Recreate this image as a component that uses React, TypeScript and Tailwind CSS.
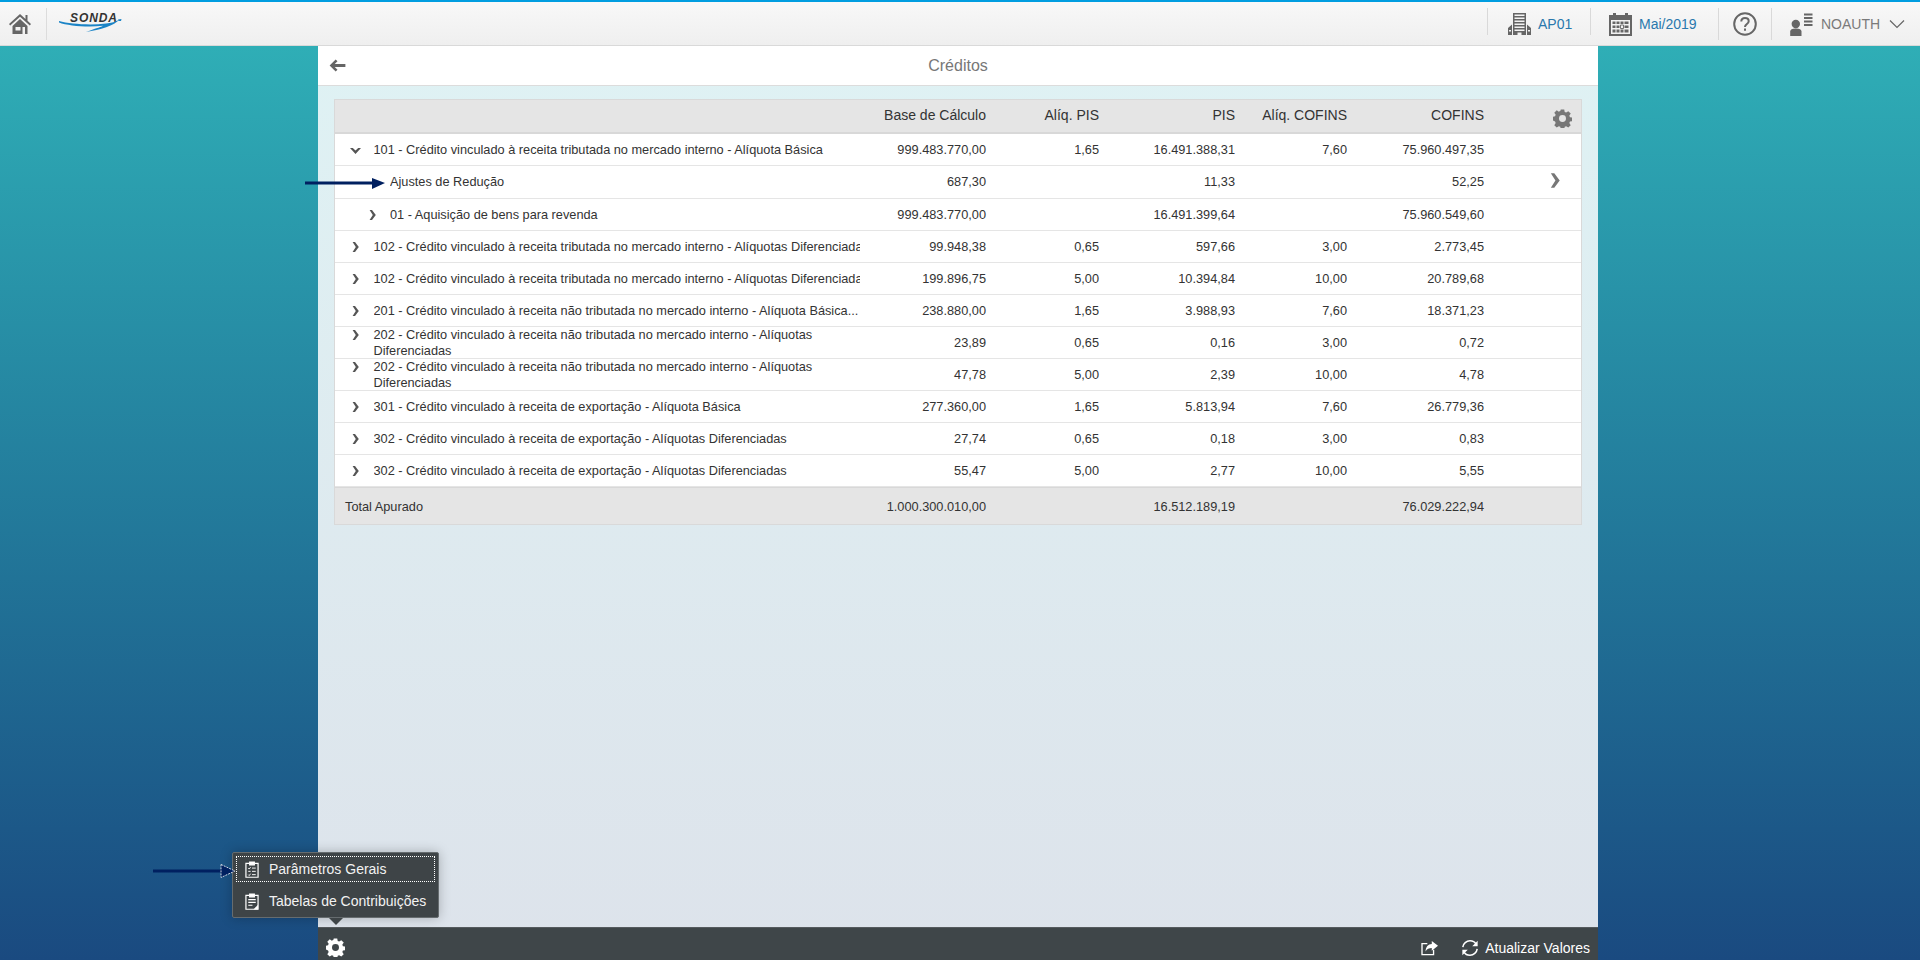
import React from "react";

type Row = { t: string; b: string; ap?: string; p: string; ac?: string; c: string; indent?: boolean; open?: boolean; noChev?: boolean; wrap?: boolean; end?: boolean };

const rows: Row[] = [
  { t: "101 - Crédito vinculado à receita tributada no mercado interno - Alíquota Básica", b: "999.483.770,00", ap: "1,65", p: "16.491.388,31", ac: "7,60", c: "75.960.497,35", open: true },
  { t: "Ajustes de Redução", b: "687,30", p: "11,33", c: "52,25", indent: true, noChev: true, end: true },
  { t: "01 - Aquisição de bens para revenda", b: "999.483.770,00", p: "16.491.399,64", c: "75.960.549,60", indent: true },
  { t: "102 - Crédito vinculado à receita tributada no mercado interno - Alíquotas Diferenciadas", b: "99.948,38", ap: "0,65", p: "597,66", ac: "3,00", c: "2.773,45" },
  { t: "102 - Crédito vinculado à receita tributada no mercado interno - Alíquotas Diferenciadas", b: "199.896,75", ap: "5,00", p: "10.394,84", ac: "10,00", c: "20.789,68" },
  { t: "201 - Crédito vinculado à receita não tributada no mercado interno - Alíquota Básica...", b: "238.880,00", ap: "1,65", p: "3.988,93", ac: "7,60", c: "18.371,23" },
  { t: "202 - Crédito vinculado à receita não tributada no mercado interno - Alíquotas Diferenciadas", b: "23,89", ap: "0,65", p: "0,16", ac: "3,00", c: "0,72", wrap: true },
  { t: "202 - Crédito vinculado à receita não tributada no mercado interno - Alíquotas Diferenciadas", b: "47,78", ap: "5,00", p: "2,39", ac: "10,00", c: "4,78", wrap: true },
  { t: "301 - Crédito vinculado à receita de exportação - Alíquota Básica", b: "277.360,00", ap: "1,65", p: "5.813,94", ac: "7,60", c: "26.779,36" },
  { t: "302 - Crédito vinculado à receita de exportação - Alíquotas Diferenciadas", b: "27,74", ap: "0,65", p: "0,18", ac: "3,00", c: "0,83" },
  { t: "302 - Crédito vinculado à receita de exportação - Alíquotas Diferenciadas", b: "55,47", ap: "5,00", p: "2,77", ac: "10,00", c: "5,55" },
];

function ChevR({ className = "", color = "#555" }: { className?: string; color?: string }) {
  return (
    <svg viewBox="0 0 7 10" className={className} fill={color}>
      <path d="M0.6 0 H3 L6.8 5 L3 10 H0.6 L3.8 5 Z" />
    </svg>
  );
}

function ChevD({ className = "" }: { className?: string }) {
  return (
    <svg viewBox="0 0 11 6" className={className} fill="#555">
      <path d="M0 0 L2.8 0 L5.5 2.6 L8.2 0 L11 0 L5.5 6 Z" />
    </svg>
  );
}

function Gear({ className = "", color = "#777" }: { className?: string; color?: string }) {
  return (
    <svg viewBox="0 0 24 24" className={className} fill={color}>
      <path fillRule="evenodd" d="M9.8 0.5h4.4l.6 3.2c.6.2 1.2.5 1.8.8l2.7-1.8 3.1 3.1-1.8 2.7c.3.6.6 1.2.8 1.8l3.2.6v4.4l-3.2.6c-.2.6-.5 1.2-.8 1.8l1.8 2.7-3.1 3.1-2.7-1.8c-.6.3-1.2.6-1.8.8l-.6 3.2H9.8l-.6-3.2c-.6-.2-1.2-.5-1.8-.8l-2.7 1.8-3.1-3.1 1.8-2.7c-.3-.6-.6-1.2-.8-1.8L-.6 14.2V9.8l3.2-.6c.2-.6.5-1.2.8-1.8L1.6 4.7l3.1-3.1 2.7 1.8c.6-.3 1.2-.6 1.8-.8L9.8.5zM12 7.6a4.4 4.4 0 1 0 0 8.8 4.4 4.4 0 0 0 0-8.8z" />
    </svg>
  );
}

function Sep({ h }: { h: string }) {
  return <div className={`w-px shrink-0 self-start mt-[6px] bg-[#d9d9d9] ${h}`} />;
}

export default function App() {
  return (
    <div className="relative w-[1920px] h-[962px] bg-white overflow-hidden [font-family:Liberation_Sans,Arial,sans-serif] text-[#333]">
      {/* Shell header */}
      <header className="absolute left-0 top-0 w-full h-[46px] border-t-2 border-[#009de0] border-b border-b-[#d9d9d9] bg-gradient-to-b from-[#f8f8f8] to-[#efefef]">
        <svg viewBox="0 0 22 20" className="absolute left-[9px] top-[12px] w-[22px] h-[20px]" fill="#666">
          <path d="M11 0 L0 10 L1.2 11.5 L11 2.8 L20.8 11.5 L22 10 L18.5 6.8 V1 H16.5 V5 Z" />
          <path fillRule="evenodd" d="M3.5 12 L11 5 L18.5 12 V20 H3.5 Z M6.5 13 V16.5 H11.5 V13 Z M13.5 13 V20 H16 V13 Z" />
        </svg>
        <div className="absolute left-[46px] top-[6px] w-px h-[32px] bg-[#dcdcdc]" />
        {/* Logo */}
        <div className="absolute left-[58px] top-[8px] w-[66px] h-[28px]">
          <span className="absolute left-[12px] top-[2px] text-[12px] leading-[13px] font-bold italic text-[#333] tracking-[0.9px]">SONDA</span>
          <svg viewBox="0 0 66 28" className="absolute left-0 top-0 w-[66px] h-[28px]">
            <path d="M1 11 C12 14 32 15.5 48 13.5 C53 13 58 11.5 61 10 C57 15 42 20 28 22 C36 19 42 17.5 45 15.8 C30 17.5 10 16 1 12.5 Z" fill="#1b84c6" />
            <path d="M60 9.5 L63.5 9 L63 11 L60.5 11 Z" fill="#1b84c6" />
          </svg>
        </div>

        <div className="absolute left-[1487px] top-0 h-[44px] flex items-center">
          <Sep h="h-[27px]" />
          <div className="flex items-center w-[102px] pl-[20px] gap-[7px]">
            <svg viewBox="0 0 23 22" className="w-[23px] h-[22px]" fill="#666">
              <path fillRule="evenodd" d="M5 0 H18 V22 H5 Z M6.5 1.5 V3 H16.5 V1.5 Z M6.5 4.5 V6 H16.5 V4.5 Z M6.5 7.5 V9 H16.5 V7.5 Z M6.5 10.5 V12 H16.5 V10.5 Z M6.5 13.5 V15 H16.5 V13.5 Z M6.5 16.5 V18 H16.5 V16.5 Z M9.5 19.5 V22 H13.5 V19.5 Z" />
              <path fillRule="evenodd" d="M0 15 L4 11.5 V22 H0 Z M1 17 V18.5 H3 V17 Z" />
              <path fillRule="evenodd" d="M19 11.5 L23 15 V22 H19 Z M20 17 V18.5 H22 V17 Z" />
            </svg>
            <span className="text-[14px] text-[#2a78ad]">AP01</span>
          </div>
          <Sep h="h-[27px]" />
          <div className="flex items-center w-[127px] pl-[18px] gap-[7px]">
            <svg viewBox="0 0 23 23" className="w-[23px] h-[23px]" fill="#666">
              <path fillRule="evenodd" d="M0 2 H4 V0 H7 V2 H16 V0 H19 V2 H23 V23 H0 Z M2 7 V21 H21 V7 Z" />
              <path d="M3.5 8.5 H6.5 V11 H3.5 Z M7.5 8.5 H10.5 V11 H7.5 Z M11.5 8.5 H14.5 V11 H11.5 Z M15.5 8.5 H19.5 V11 H15.5 Z M3.5 12.5 H6.5 V15 H3.5 Z M7.5 12.5 H10.5 V15 H7.5 Z M15.5 12.5 H19.5 V15 H15.5 Z M3.5 16.5 H6.5 V19.5 H3.5 Z M7.5 16.5 H10.5 V19.5 H7.5 Z M11.5 16.5 H14.5 V19.5 H11.5 Z M15.5 16.5 H19.5 V19.5 H15.5 Z" />
              <path d="M11.5 12 H14.5 V15.5 H11.5 Z" fill="none" stroke="#666" strokeWidth="0.9" />
            </svg>
            <span className="text-[14px] text-[#2a78ad]">Mai/2019</span>
          </div>
          <Sep h="h-[32px]" />
          <div className="flex items-center justify-center w-[52px]">
            <svg viewBox="0 0 24 24" className="w-[24px] h-[24px]" fill="none" stroke="#666" strokeWidth="2">
              <circle cx="12" cy="12" r="10.8" />
              <path d="M8.3 9.6 C8.3 7.2 10 6 12 6 C14 6 15.7 7.2 15.7 9.2 C15.7 12 12 12 12 15" />
              <path d="M12 16.5 V18.8" />
            </svg>
          </div>
          <Sep h="h-[32px]" />
          <div className="flex items-center w-[134px] pl-[18px]">
            <svg viewBox="0 0 23 23" className="w-[23px] h-[23px]" fill="#666">
              <circle cx="5.8" cy="11" r="4.2" />
              <path d="M0.2 23 V18.5 C0.2 16.5 2 15.5 5.8 15.5 C9.6 15.5 11.5 16.5 11.5 18.5 V23 Z" />
              <path d="M14 0.5 H22.5 V2.5 H14 Z M14 4 H22.5 V6 H14 Z M14 7.5 H22.5 V9.5 H14 Z M14 11 H22.5 V13 H14 Z" />
            </svg>
            <span className="ml-[8px] text-[14px] text-[#7a7a7a] w-[60px]">NOAUTH</span>
            <svg viewBox="0 0 16 10" className="ml-[8px] w-[16px] h-[10px]" fill="none" stroke="#666" strokeWidth="1.2">
              <path d="M1 1.5 L8 8.5 L15 1.5" />
            </svg>
          </div>
        </div>
      </header>

      {/* Background */}
      <div className="absolute left-0 top-[46px] w-full h-[914px] bg-gradient-to-b from-[#2faeb6] to-[#1a4a80]" />

      {/* Main */}
      <main className="absolute left-[318px] top-[46px] w-[1280px] h-[914px] bg-gradient-to-b from-[#dff2f4] to-[#dde3eb] flex flex-col">
        <div className="h-[40px] bg-white border-b border-[#dcdcdc] flex items-center justify-center relative shrink-0">
          <svg viewBox="0 0 18 14" className="absolute left-[11px] top-[13px] w-[17px] h-[13px]" fill="#666">
            <path d="M7 0.5 L9 2.5 L6 5.5 H17.5 V8.5 H6 L9 11.5 L7 13.5 L0.5 7 Z" />
          </svg>
          <span className="text-[16px] text-[#777]">Créditos</span>
        </div>

        <div className="mx-[16px] mt-[13px] border border-[#d9d9d9] bg-white">
          <div className="h-[34px] bg-[#e5e5e5] border-b-2 border-[#d8d8d8] flex items-center text-[14px] text-[#333] relative">
            <div className="w-[525px]" />
            <div className="w-[126px] text-right pb-[1px]">Base de Cálculo</div>
            <div className="w-[113px] text-right pb-[1px]">Alíq. PIS</div>
            <div className="w-[136px] text-right pb-[1px]">PIS</div>
            <div className="w-[112px] text-right pb-[1px]">Alíq. COFINS</div>
            <div className="w-[137px] text-right pb-[1px]">COFINS</div>
            <Gear className="absolute left-[1218px] top-[9px] w-[19px] h-[19px]" />
          </div>
          {rows.map((r, i) => (
            <div key={i} className={`border-b border-[#e5e5e5] flex items-center text-[12.75px] relative last:border-b-0 ${i === 1 ? "h-[33px]" : "h-[32px]"}`}>
              <div className={`w-[525px] relative h-full ${r.indent ? "pl-[55px]" : "pl-[38.5px]"}`}>
                {!r.noChev && !r.open && (
                  <ChevR className={`absolute w-[7px] h-[10px] ${r.indent ? "left-[33.5px]" : "left-[16.5px]"} ${r.wrap ? "top-[3px]" : "top-[11px]"}`} />
                )}
                {r.open && <ChevD className="absolute left-[15px] top-[14px] w-[11px] h-[6px]" />}
                {r.wrap ? (
                  <div className="leading-[16px] w-[460px]">{r.t}</div>
                ) : (
                  <div className="h-full leading-[31px] whitespace-nowrap overflow-hidden">{r.t}</div>
                )}
              </div>
              <div className="w-[126px] text-right">{r.b}</div>
              <div className="w-[113px] text-right">{r.ap ?? ""}</div>
              <div className="w-[136px] text-right">{r.p}</div>
              <div className="w-[112px] text-right">{r.ac ?? ""}</div>
              <div className="w-[137px] text-right">{r.c}</div>
              {r.end && <ChevR color="#777" className="absolute left-[1215px] top-[7px] w-[10px] h-[15px]" />}
            </div>
          ))}
          <div className="h-[37px] bg-[#e5e5e5] border-t border-[#d8d8d8] flex items-center text-[12.75px] pt-[2px]">
            <div className="w-[525px] pl-[10px]">Total Apurado</div>
            <div className="w-[126px] text-right">1.000.300.010,00</div>
            <div className="w-[113px]" />
            <div className="w-[136px] text-right">16.512.189,19</div>
            <div className="w-[112px]" />
            <div className="w-[137px] text-right">76.029.222,94</div>
          </div>
        </div>

        {/* Footer */}
        <div className="mt-auto h-[33px] bg-[#3f4649] border-t border-[#555b5e] relative flex items-center justify-end text-white text-[14px] pr-[8px] pt-[8px] shrink-0">
          <Gear color="#fff" className="absolute left-[8px] top-[10px] w-[19px] h-[19px]" />
          <svg viewBox="0 0 20 18" className="w-[18px] h-[16px] mr-[22px]" fill="none" stroke="#fff" strokeWidth="1.5">
            <path d="M14 11 V16.5 H1 V4 H7" />
            <path fill="#fff" stroke="none" d="M12 1 L19 6.5 L12 12 V9 C9 9 6.5 10 5 13 C5 8 8 4.5 12 4.5 Z" />
          </svg>
          <svg viewBox="0 0 20 20" className="w-[18px] h-[18px] mr-[6px]" fill="none" stroke="#fff" strokeWidth="1.7">
            <path d="M2 9 C2.5 5 6 2 10 2 C13 2 15.5 3.5 16.5 5.5" />
            <path d="M18 11 C17.5 15 14 18 10 18 C7 18 4.5 16.5 3.5 14.5" />
            <path fill="#fff" stroke="none" d="M18.5 2 V8 H12.5 Z M1.5 18 V12 H7.5 Z" />
          </svg>
          <span>Atualizar Valores</span>
        </div>
      </main>

      {/* Menu popover */}
      <div className="absolute left-[232px] top-[852px] w-[207px] h-[66px] bg-[#3e4447] border border-[#666c6f] rounded-[2px] shadow-[0_0_12px_rgba(0,0,0,0.25)] p-[3px] text-[14px] text-[#f2f2f2]">
        <div className="h-[26px] border border-dotted border-white flex items-center pl-[8px] gap-[10px]">
          <svg viewBox="0 0 15 18" className="w-[14px] h-[17px]" fill="none" stroke="#fff" strokeWidth="1.3">
            <path d="M4.5 2.5 H1 V17.3 H14 V2.5 H10.5" />
            <path fill="#fff" d="M5 1 H10 V4 H5 Z" />
            <path d="M3.5 7.5 L4.5 8.5 L6 6.5 M7.5 7.5 H11.5 M3.5 11 H6 M7.5 11 H11.5 M3.5 14.5 L4.5 15.5 L6 13.5 M7.5 14.5 H11.5" strokeWidth="1" />
          </svg>
          <span>Parâmetros Gerais</span>
        </div>
        <div className="h-[32px] mt-[3px] flex items-center pl-[9px] gap-[10px]">
          <svg viewBox="0 0 15 18" className="w-[14px] h-[17px]" fill="none" stroke="#fff" strokeWidth="1.3">
            <path d="M4.5 2.5 H1 V17.3 H14 V2.5 H10.5" />
            <path fill="#fff" d="M5 1 H10 V4 H5 Z" />
            <path d="M3.5 7 H11.5 M3.5 10 H11.5 M3.5 13 H8" strokeWidth="1.2" />
            <path fill="#fff" stroke="none" d="M9 17.5 L14 12.5 V17.5 Z" />
          </svg>
          <span>Tabelas de Contribuições</span>
        </div>
        <div className="absolute left-[96px] top-[65px] w-0 h-0 border-x-[7px] border-x-transparent border-t-[7px] border-t-[#3e4447]" />
      </div>

      {/* Annotation arrows */}
      <svg viewBox="0 0 90 14" className="absolute left-[304px] top-[176px] w-[90px] h-[14px]">
        <path d="M1 5.5 H68 V8.5 H1 Z" fill="#002060" />
        <path d="M68 2 L81 7 L68 13 Z" fill="#002060" />
      </svg>
      <svg viewBox="0 0 90 16" className="absolute left-[152px] top-[863px] w-[90px] h-[16px]">
        <path d="M1 6.5 H70 V9.5 H1 Z" fill="#002060" />
        <path d="M69 1.5 L83 8 L69 14.5 Z" fill="#002060" stroke="#fff" strokeWidth="0.8" strokeDasharray="2 1" />
      </svg>
    </div>
  );
}
